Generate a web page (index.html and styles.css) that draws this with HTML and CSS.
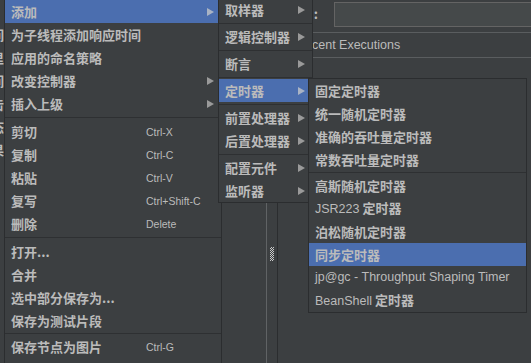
FILE: index.html
```html
<!DOCTYPE html>
<html>
<head>
<meta charset="utf-8">
<link rel="stylesheet" href="styles.css">
</head>
<body>
<div class="screen">
  <div class="tree">
    <div class="row">组1</div>
    <div class="row">时间</div>
    <div class="row">重里</div>
    <div class="row">时间</div>
    <div class="row">点击</div>
    <div class="row">状态</div>
    <div class="row">结果</div>
  </div>
  <div class="splitter"><div class="grip"></div></div>
  <div class="main">
    <div class="field-row"><span class="lbl"><span class="lbl-name">名称</span>:</span><div class="field"></div></div>
    <div class="hdr">Recent Executions</div>
  </div>

  <div class="menu m1">
    <div class="item sel"><span class="t">添加</span><i class="arr"></i></div>
    <div class="item"><span class="t">为子线程添加响应时间</span></div>
    <div class="item"><span class="t">应用的命名策略</span></div>
    <div class="item"><span class="t">改变控制器</span><i class="arr"></i></div>
    <div class="item"><span class="t">插入上级</span><i class="arr"></i></div>
    <div class="sep sep5"></div>
    <div class="item"><span class="t">剪切</span><span class="key">Ctrl-X</span></div>
    <div class="item"><span class="t">复制</span><span class="key">Ctrl-C</span></div>
    <div class="item"><span class="t">粘贴</span><span class="key">Ctrl-V</span></div>
    <div class="item"><span class="t">复写</span><span class="key">Ctrl+Shift-C</span></div>
    <div class="item"><span class="t">删除</span><span class="key">Delete</span></div>
    <div class="sep sep5"></div>
    <div class="item"><span class="t">打开...</span></div>
    <div class="item"><span class="t">合并</span></div>
    <div class="item"><span class="t">选中部分保存为...</span></div>
    <div class="item"><span class="t">保存为测试片段</span></div>
    <div class="sep sep3"></div>
    <div class="item"><span class="t">保存节点为图片</span><span class="key">Ctrl-G</span></div>
    <div class="item"><span class="t">保存屏幕为图片</span><span class="key">Ctrl+Shift-G</span></div>
  </div>

  <div class="menu m2">
    <div class="item"><span class="t">取样器</span><i class="arr"></i></div>
    <div class="sep sep4"></div>
    <div class="item"><span class="t">逻辑控制器</span><i class="arr"></i></div>
    <div class="sep sep4"></div>
    <div class="item"><span class="t">断言</span><i class="arr"></i></div>
    <div class="sep sep4"></div>
    <div class="item sel"><span class="t">定时器</span><i class="arr"></i></div>
    <div class="sep sep4"></div>
    <div class="item"><span class="t">前置处理器</span><i class="arr"></i></div>
    <div class="item"><span class="t">后置处理器</span><i class="arr"></i></div>
    <div class="sep sep4"></div>
    <div class="item"><span class="t">配置元件</span><i class="arr"></i></div>
    <div class="item"><span class="t">监听器</span><i class="arr"></i></div>
  </div>

  <div class="menu m3">
    <div class="item"><span class="t">固定定时器</span></div>
    <div class="item"><span class="t">统一随机定时器</span></div>
    <div class="item"><span class="t">准确的吞吐量定时器</span></div>
    <div class="item"><span class="t">常数吞吐量定时器</span></div>
    <div class="sep sep3"></div>
    <div class="item"><span class="t">高斯随机定时器</span></div>
    <div class="item"><span class="t"><span class="lat">JSR223</span> 定时器</span></div>
    <div class="item"><span class="t">泊松随机定时器</span></div>
    <div class="item sel"><span class="t">同步定时器</span></div>
    <div class="item"><span class="t lat">jp@gc - Throughput Shaping Timer</span></div>
    <div class="item"><span class="t"><span class="lat">BeanShell</span> 定时器</span></div>
  </div>
</div>
</body>
</html>
```
FILE: styles.css
```css
html, body {
  margin: 0;
  padding: 0;
  background: #3c3f41;
}
.screen {
  position: relative;
  display: flex;
  width: 531px;
  height: 363px;
  overflow: hidden;
  background: #3c3f41;
  font-family: "Liberation Sans", "Noto Sans CJK SC", sans-serif;
  font-size: 13px;
  color: #bbbbbb;
}
.tree {
  flex: none;
  width: 266px;
  overflow: hidden;
}
.row {
  height: 23px;
  line-height: 23px;
  margin-left: -22px;
  white-space: nowrap;
  font-family: "Noto Sans CJK SC", sans-serif;
  font-weight: 600;
}
.splitter {
  flex: none;
  width: 12px;
  box-sizing: border-box;
  border-left: 1px solid #606365;
  border-right: 1px solid #2b2d2f;
}
.grip {
  margin: 247px 0 0 3px;
  width: 4px;
  height: 14px;
  background: repeating-conic-gradient(#c8c8c8 0 25%, transparent 0 50%) 0 0 / 2px 2px;
}
.main {
  flex: 1;
  min-width: 0;
}
.field-row {
  display: flex;
  margin-top: 2px;
  height: 25px;
}
.lbl {
  width: 56px;
  box-sizing: border-box;
  padding-right: 16px;
  text-align: right;
  line-height: 24px;
  font-family: "Noto Sans CJK SC", sans-serif;
  font-weight: 600;
}
.lbl-name {
  margin-right: 4px;
}
.field {
  flex: 1;
  margin-right: -10px;
  border: 1px solid #646464;
  background: #45494a;
}
.hdr {
  margin-top: 5px;
  height: 24px;
  line-height: 24px;
  border-top: 1px solid #5a5d5f;
  border-bottom: 1px solid #5a5d5f;
  padding-left: 18px;
  font-size: 12.5px;
  white-space: nowrap;
}

.menu {
  position: absolute;
  background: #3c3f41;
  border: 1px solid #2b2d2f;
  white-space: nowrap;
}
.m1 { left: 4px; top: -1px; width: 216px; z-index: 1; }
.m2 { left: 218px; top: -3px; width: 93px; z-index: 2; }
.m3 { left: 308px; top: 78px; width: 217px; z-index: 3; }

.item {
  display: flex;
  align-items: center;
  height: 23px;
  padding: 0 7px 0 6px;
}
.item .t {
  font-family: "Noto Sans CJK SC", sans-serif;
  font-weight: 600;
  line-height: 23px;
}
.m1 .item .t { width: 135px; flex: none; }
.item.sel { background: #4b6eaf; }
.item .lat {
  font-family: "Liberation Sans", "Noto Sans CJK SC", sans-serif;
  font-weight: 400;
  font-size: 12.5px;
}
.key {
  font-size: 10.5px;
}
.arr {
  margin-left: auto;
  width: 0;
  height: 0;
  border-left: 7px solid #9a9a9a;
  border-top: 4px solid transparent;
  border-bottom: 4px solid transparent;
}
.sel .arr { border-left-color: #a9b3c4; }

.sep { width: 100%; }
.sep5 { height: 5px; background: linear-gradient(to bottom, transparent 2px, #2e3032 2px, #2e3032 3px, transparent 3px); }
.sep4 { height: 4px; background: linear-gradient(to bottom, transparent 2px, #2e3032 2px, #2e3032 3px, transparent 3px); }
.sep3 { height: 3px; background: linear-gradient(to bottom, transparent 1px, #2e3032 1px, #2e3032 2px, transparent 2px); }
```
